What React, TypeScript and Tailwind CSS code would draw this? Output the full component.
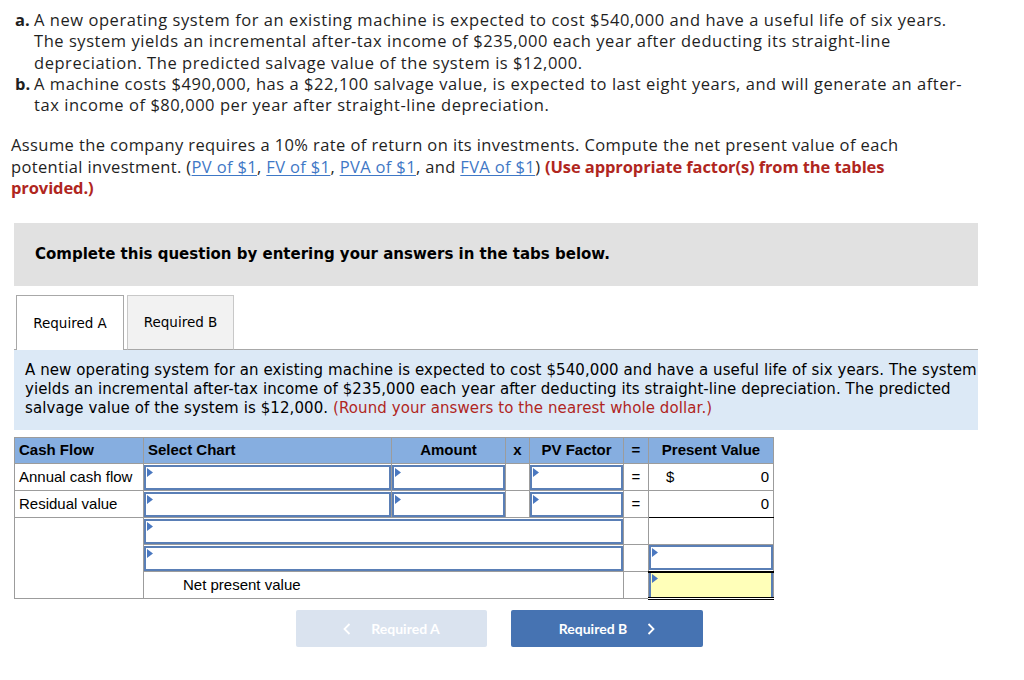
import React from "react";

const topFont = { fontFamily: "'Open Sans', Lato, sans-serif" };

function Tri() {
  return (
    <svg className="absolute left-[1px] top-[1px]" width="6" height="9" viewBox="0 0 6 9">
      <polygon points="0,0 6,4.5 0,9" fill="#4a78c0" />
    </svg>
  );
}

function InputBox({ yellow = false, tri = true }: { yellow?: boolean; tri?: boolean }) {
  return (
    <div
      className={`relative h-[25px] w-full border-2 border-[#5a7fb6] ${yellow ? "bg-[#ffffb9]" : "bg-white"}`}
    >
      {tri && <Tri />}
    </div>
  );
}

export default function App() {
  return (
    <div className="w-[1024px] h-[680px] bg-white overflow-hidden text-[#222]">
      {/* Problem statement */}
      <div
        className="pl-[11px] pt-[9px] text-[16.5px] leading-[21.25px] tracking-[0.55px] text-[#1f1f1f] whitespace-nowrap"
        style={topFont}
      >
        <div className="pl-[4px]">
          <div className="flex">
            <span className="w-[19px] font-bold shrink-0 tracking-normal">a.</span>
            <span>
              A new operating system for an existing machine is expected to cost $540,000 and have a useful life of six years.
              <br />
              The system yields an incremental after-tax income of $235,000 each year after deducting its straight-line
              <br />
              depreciation. The predicted salvage value of the system is $12,000.
            </span>
          </div>
          <div className="flex">
            <span className="w-[19px] font-bold shrink-0 tracking-normal">b.</span>
            <span>
              A machine costs $490,000, has a $22,100 salvage value, is expected to last eight years, and will generate an after-
              <br />
              tax income of $80,000 per year after straight-line depreciation.
            </span>
          </div>
        </div>
        <p className="mt-[19px]">
          <span className="tracking-[0.4px]">
            Assume the company requires a 10% rate of return on its investments. Compute the net present value of each
          </span>
          <br />
          <span className="tracking-[0.35px]">
            potential investment. (
            <span className="text-[#3f78c6] underline underline-offset-2">PV of $1</span>,{" "}
            <span className="text-[#3f78c6] underline underline-offset-2">FV of $1</span>,{" "}
            <span className="text-[#3f78c6] underline underline-offset-2">PVA of $1</span>, and{" "}
            <span className="text-[#3f78c6] underline underline-offset-2">FVA of $1</span>){" "}
          </span>
          <span className="font-bold text-[#b0261e] tracking-[-0.1px]">
            (Use appropriate factor(s) from the tables
            <br />
            provided.)
          </span>
        </p>
      </div>

      {/* Gray instruction box */}
      <div
        className="ml-[14px] mt-[25px] w-[964px] h-[63px] bg-[#e1e1e1] flex items-center pl-[21px] text-[15px] font-bold text-black"
        style={{ fontFamily: "'DejaVu Sans', Verdana, sans-serif" }}
      >
        Complete this question by entering your answers in the tabs below.
      </div>

      {/* Tabs */}
      <div
        className="ml-[14px] mt-[9px] w-[964px] flex items-end h-[55px]"
        style={{ fontFamily: "'DejaVu Sans', Verdana, sans-serif" }}
      >
        <div className="w-[2px] h-full border-b border-[#a8a8a8]"></div>
        <div className="w-[108px] h-full bg-white border border-b-0 border-[#a8a8a8] flex items-center justify-center text-[13.5px] text-black">
          Required A
        </div>
        <div className="w-[3px] h-full border-b border-[#a8a8a8]"></div>
        <div className="w-[107px] h-full bg-[#f2f2f2] border border-[#c8c8c8] border-b-[#a8a8a8] flex items-center justify-center text-[13.5px] text-black">
          Required B
        </div>
        <div className="flex-1 h-full border-b border-[#a8a8a8]"></div>
      </div>

      {/* Info box */}
      <div
        className="ml-[14px] w-[964px] h-[80px] bg-[#dce9f6] pl-[11px] pt-[11px] text-[15px] leading-[19px] tracking-[0.09px] text-black whitespace-nowrap"
        style={{ fontFamily: "'DejaVu Sans', Verdana, sans-serif" }}
      >
        A new operating system for an existing machine is expected to cost $540,000 and have a useful life of six years. The system
        <br />
        yields an incremental after-tax income of $235,000 each year after deducting its straight-line depreciation. The predicted
        <br />
        salvage value of the system is $12,000.{" "}
        <span className="text-[#b0261e]">(Round your answers to the nearest whole dollar.)</span>
      </div>

      {/* Table */}
      <table
        className="ml-[14px] mt-[7px] border-collapse table-fixed text-[15px] text-black"
        style={{ fontFamily: "'Liberation Sans', Arial, sans-serif", width: 759 }}
      >
        <colgroup>
          <col style={{ width: 129 }} />
          <col style={{ width: 248 }} />
          <col style={{ width: 114 }} />
          <col style={{ width: 24 }} />
          <col style={{ width: 94 }} />
          <col style={{ width: 25 }} />
          <col style={{ width: 125 }} />
        </colgroup>
        <thead>
          <tr className="h-[26px] bg-[#86aee0] font-bold">
            <th className="border border-[#9c9c9c] text-left pl-[4px] font-bold">Cash Flow</th>
            <th className="border border-[#9c9c9c] text-left pl-[4px] font-bold">Select Chart</th>
            <th className="border border-[#9c9c9c] text-center font-bold">Amount</th>
            <th className="border border-[#9c9c9c] text-center font-bold">x</th>
            <th className="border border-[#9c9c9c] text-center font-bold">PV Factor</th>
            <th className="border border-[#9c9c9c] text-center font-bold">=</th>
            <th className="border border-[#9c9c9c] text-center font-bold">Present Value</th>
          </tr>
        </thead>
        <tbody>
          <tr className="h-[27px]">
            <td className="border border-[#9c9c9c] pl-[4px]">Annual cash flow</td>
            <td className="border border-[#9c9c9c] p-0"><InputBox /></td>
            <td className="border border-[#9c9c9c] p-0"><InputBox /></td>
            <td className="border border-[#9c9c9c]"></td>
            <td className="border border-[#9c9c9c] p-0"><InputBox /></td>
            <td className="border border-[#9c9c9c] text-center">=</td>
            <td className="border border-[#9c9c9c] px-[4px]">
              <div className="flex justify-between pl-[13px]">
                <span>$</span>
                <span>0</span>
              </div>
            </td>
          </tr>
          <tr className="h-[27px]">
            <td className="border border-[#9c9c9c] pl-[4px]">Residual value</td>
            <td className="border border-[#9c9c9c] p-0"><InputBox /></td>
            <td className="border border-[#9c9c9c] p-0"><InputBox /></td>
            <td className="border border-[#9c9c9c]"></td>
            <td className="border border-[#9c9c9c] p-0"><InputBox /></td>
            <td className="border border-[#9c9c9c] text-center">=</td>
            <td className="border border-[#9c9c9c] border-b-black px-[4px] text-right">0</td>
          </tr>
          <tr className="h-[27px]">
            <td rowSpan={3} className="border border-[#9c9c9c]"></td>
            <td colSpan={4} className="border border-[#9c9c9c] p-0"><InputBox /></td>
            <td className="border border-[#9c9c9c]"></td>
            <td className="border border-[#9c9c9c] border-t-black"></td>
          </tr>
          <tr className="h-[27px]">
            <td colSpan={4} className="border border-[#9c9c9c] p-0"><InputBox /></td>
            <td className="border border-[#9c9c9c]"></td>
            <td className="border border-[#9c9c9c] p-0"><InputBox /></td>
          </tr>
          <tr className="h-[27px]">
            <td colSpan={4} className="border border-[#9c9c9c] pl-[39px]">Net present value</td>
            <td className="border border-[#9c9c9c]"></td>
            <td className="border border-[#9c9c9c] border-t-2 border-t-black border-b-[3px] border-b-black border-double p-0">
              <div className="relative h-[24px] w-full border-2 border-b-0 border-t-0 border-[#5a7fb6] bg-[#ffffb9]">
                <Tri />
              </div>
            </td>
          </tr>
        </tbody>
      </table>

      {/* Buttons */}
      <div className="mt-[10px] flex pl-[296px] gap-[24px]" style={{ fontFamily: "Lato, 'Open Sans', sans-serif" }}>
        <div className="w-[191px] h-[37px] rounded-[2px] bg-[#dae3ef] flex items-center justify-center gap-[20px] text-white text-[14px] font-bold">
          <svg width="8" height="12" viewBox="0 0 8 12">
            <polyline points="6.5,1 1.5,6 6.5,11" fill="none" stroke="white" strokeWidth="1.8" />
          </svg>
          <span>Required A</span>
        </div>
        <div className="w-[192px] h-[37px] rounded-[2px] bg-[#4673b2] flex items-center justify-center gap-[20px] text-white text-[14px] font-bold">
          <span>Required B</span>
          <svg width="8" height="12" viewBox="0 0 8 12">
            <polyline points="1.5,1 6.5,6 1.5,11" fill="none" stroke="white" strokeWidth="1.8" />
          </svg>
        </div>
      </div>
    </div>
  );
}
